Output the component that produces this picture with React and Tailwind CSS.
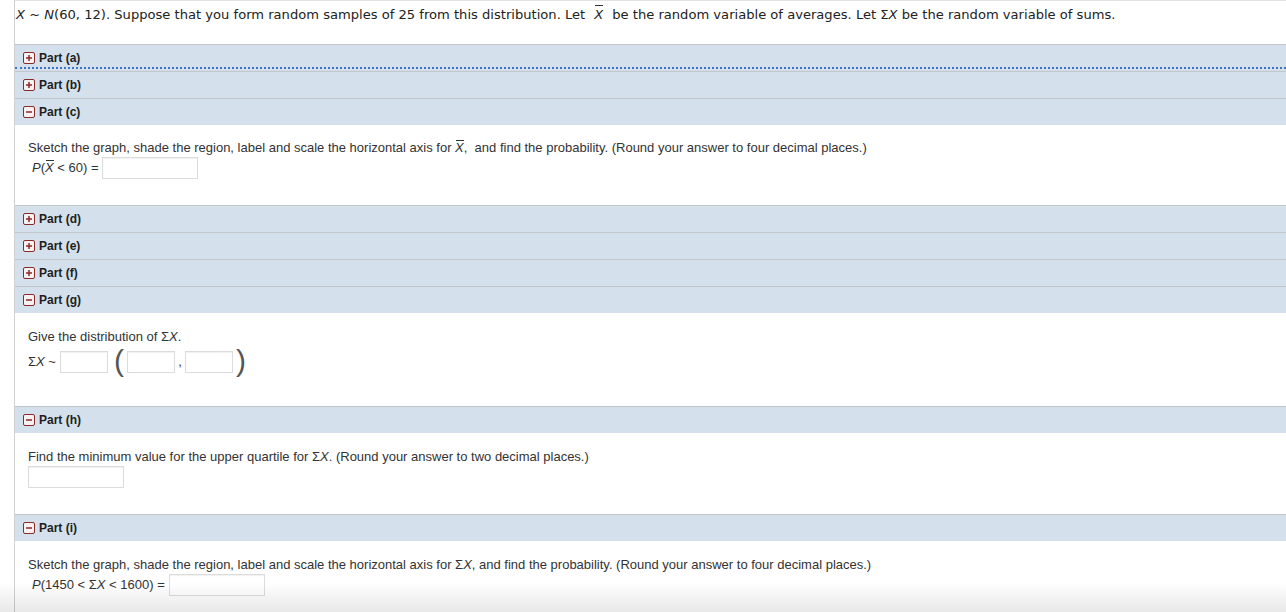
import React from "react";

function Icon({ open }) {
  return (
    <svg width="12" height="12" viewBox="0 0 12 12" className="shrink-0">
      <rect x="0.5" y="0.5" width="11" height="11" rx="1.5" fill="#f6f2f2" stroke="#8c2a2a" strokeWidth="1" />
      <rect x="3" y="5.25" width="6" height="1.5" fill="#8c2a2a" />
      {!open && <rect x="5.25" y="3" width="1.5" height="6" fill="#8c2a2a" />}
    </svg>
  );
}

function Header({ label, open, focused }) {
  return (
    <div className="relative h-[27px] border-t border-[#c3c7cb] bg-[#d4e0eb] flex items-center gap-[4px] pl-[8px]">
      <Icon open={open} />
      <span className="text-[12px] font-bold text-[#1e1e1e]" style={{ fontFamily: '"Liberation Sans", Arial, sans-serif' }}>
        {label}
      </span>
      {focused && <div className="absolute left-0 right-0 bottom-[2px] border-b-2 border-dotted border-[#3f74c9]" />}
    </div>
  );
}

function Input({ w = "w-[96px]" }) {
  return <div className={`${w} h-[22px] bg-white border border-[#dcdcdc] shadow-[inset_0_1px_1px_rgba(0,0,0,0.06)]`} />;
}

const Xbar = () => (
  <span className="relative inline-block italic">
    X
    <span className="absolute left-[1px] right-[0px] top-[0px] h-px bg-[#333]" />
  </span>
);

export default function App() {
  const sans = { fontFamily: '"Liberation Sans", Arial, sans-serif' };
  return (
    <div className="relative h-[612px] w-[1286px] overflow-hidden bg-white">
      <div className="ml-[14px] h-full border-l border-[#d0d0d0] border-t border-t-[#e2e2e2]">
        {/* Intro */}
        <div
          className="h-[43px] pt-[6px] pl-[1px] text-[13.1px] leading-[16px] text-[#222]"
          style={{ fontFamily: '"DejaVu Sans", Verdana, sans-serif' }}
        >
          <span className="italic">X</span> ~ <span className="italic">N</span>(60, 12). Suppose that you form random samples of 25 from this distribution. Let
          <span className="relative inline-block italic mx-[9px]">
            X
            <span className="absolute left-[1px] right-0 -top-[2px] h-px bg-[#333]" />
          </span>
          be the random variable of averages. Let Σ<span className="italic">X</span> be the random variable of sums.
        </div>

        <Header label="Part (a)" focused />
        <Header label="Part (b)" />
        <Header label="Part (c)" open />

        <div className="h-[80px] pl-[13px] pt-[15px] text-[13px] leading-[16px] text-[#333]" style={sans}>
          <div>
            Sketch the graph, shade the region, label and scale the horizontal axis for <Xbar />,&nbsp; and find the probability. (Round your answer to four decimal places.)
          </div>
          <div className="mt-[1px] flex items-center h-[22px] pl-[4px] gap-[3px]">
            <span>
              <span className="italic">P</span>(<Xbar /> &lt; 60) =
            </span>
            <Input />
          </div>
        </div>

        <Header label="Part (d)" />
        <Header label="Part (e)" />
        <Header label="Part (f)" />
        <Header label="Part (g)" open />

        <div className="h-[93px] pl-[13px] pt-[16px] text-[13px] leading-[16px] text-[#333]" style={sans}>
          <div>
            Give the distribution of Σ<span className="italic">X</span>.
          </div>
          <div className="mt-[6px] flex items-center h-[22px]">
            <span className="w-[32px]">
              Σ<span className="italic">X</span> ~
            </span>
            <Input w="w-[48px]" />
            <span className="ml-[6px] w-[13px] text-[30px] leading-[22px] font-light text-[#555] -mt-[2px]">(</span>
            <Input w="w-[48px]" />
            <span className="w-[10px] text-center">,</span>
            <Input w="w-[48px]" />
            <span className="ml-[3px] text-[30px] leading-[22px] font-light text-[#555] -mt-[2px]">)</span>
          </div>
        </div>

        <Header label="Part (h)" open />

        <div className="h-[81px] pl-[13px] pt-[16px] text-[13px] leading-[16px] text-[#333]" style={sans}>
          <div>
            Find the minimum value for the upper quartile for Σ<span className="italic">X</span>. (Round your answer to two decimal places.)
          </div>
          <div className="mt-[1px]">
            <Input />
          </div>
        </div>

        <Header label="Part (i)" open />

        <div className="pl-[13px] pt-[16px] text-[13px] leading-[16px] text-[#333]" style={sans}>
          <div>
            Sketch the graph, shade the region, label and scale the horizontal axis for Σ<span className="italic">X</span>, and find the probability. (Round your answer to four decimal places.)
          </div>
          <div className="mt-[1px] flex items-center h-[22px] pl-[4px] gap-[4px]">
            <span>
              <span className="italic">P</span>(1450 &lt; Σ<span className="italic">X</span> &lt; 1600) =
            </span>
            <Input />
          </div>
        </div>
      </div>
      <div className="pointer-events-none absolute bottom-0 left-0 right-0 h-[30px] bg-gradient-to-b from-transparent to-[rgba(0,0,0,0.09)]" />
    </div>
  );
}
